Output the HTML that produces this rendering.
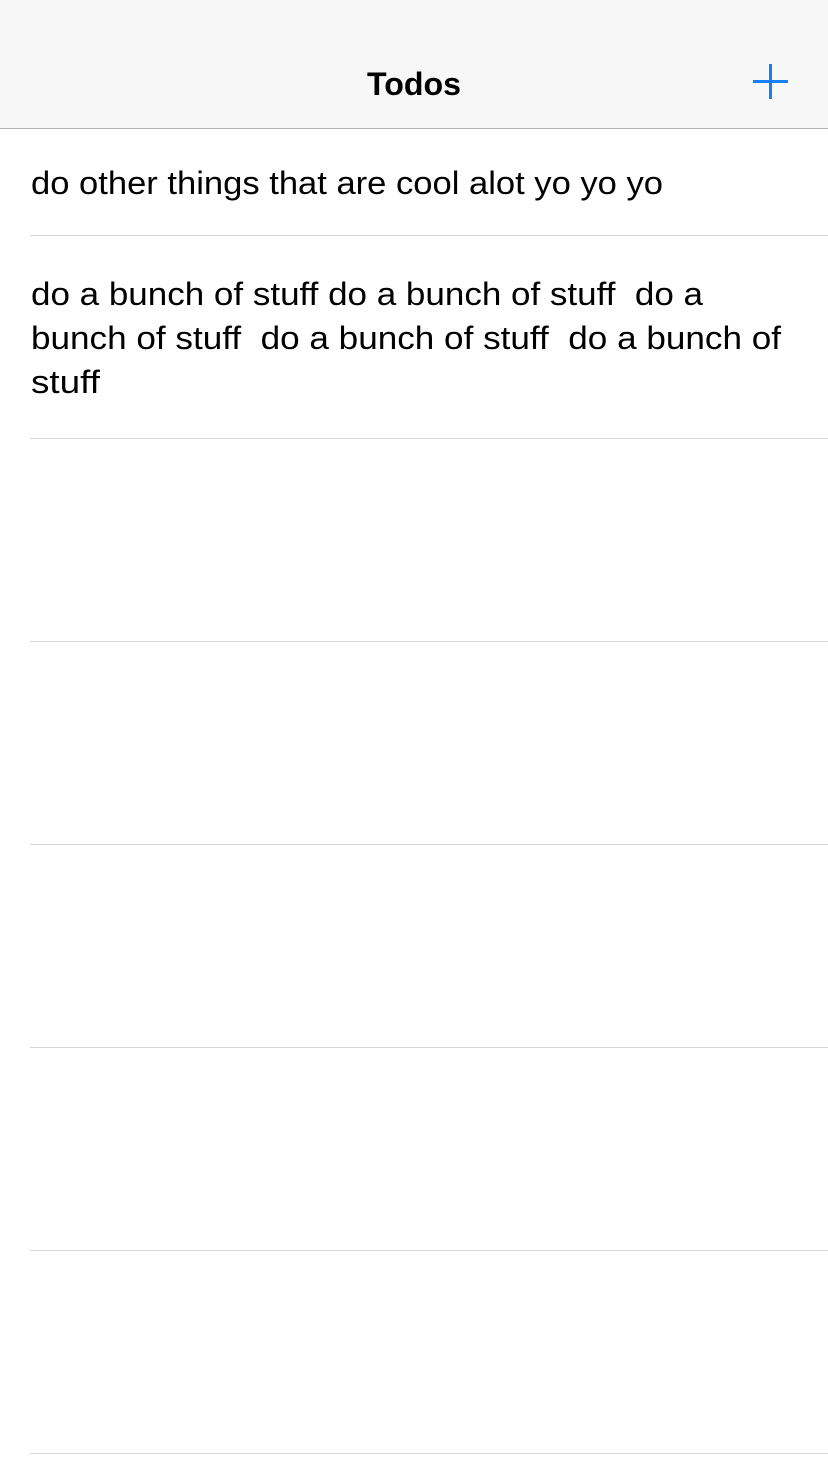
<!DOCTYPE html>
<html><head><meta charset="utf-8"><style>
html,body{margin:0;padding:0;background:#fff;width:828px;height:1472px;overflow:hidden}
svg{display:block}
</style></head><body>
<svg width="828" height="1472" viewBox="0 0 828 1472" xmlns="http://www.w3.org/2000/svg" font-family="Liberation Sans, sans-serif">
<rect x="0" y="0" width="828" height="128" fill="#f7f7f7"/>
<rect x="0" y="128" width="828" height="1" fill="#b2b2b2"/>
<text x="367" y="95" font-size="32" font-weight="bold" fill="#000" textLength="94" lengthAdjust="spacingAndGlyphs">Todos</text>
<rect x="769" y="64" width="3" height="35" fill="#147efb"/>
<rect x="753" y="80" width="35" height="3" fill="#147efb"/>
<g font-size="32" fill="#000">
<text x="31" y="194" textLength="632" lengthAdjust="spacingAndGlyphs">do other things that are cool alot yo yo yo</text>
<text x="31" y="305" textLength="672" lengthAdjust="spacingAndGlyphs" xml:space="preserve">do a bunch of stuff do a bunch of stuff  do a</text>
<text x="31" y="349" textLength="750" lengthAdjust="spacingAndGlyphs" xml:space="preserve">bunch of stuff  do a bunch of stuff  do a bunch of</text>
<text x="31" y="393" textLength="69" lengthAdjust="spacingAndGlyphs">stuff</text>
</g>
<g fill="#d6d6d6">
<rect x="30" y="235" width="798" height="1"/>
<rect x="30" y="438" width="798" height="1"/>
<rect x="30" y="641" width="798" height="1"/>
<rect x="30" y="844" width="798" height="1"/>
<rect x="30" y="1047" width="798" height="1"/>
<rect x="30" y="1250" width="798" height="1"/>
<rect x="30" y="1453" width="798" height="1"/>
</g>
</svg>
</body></html>
